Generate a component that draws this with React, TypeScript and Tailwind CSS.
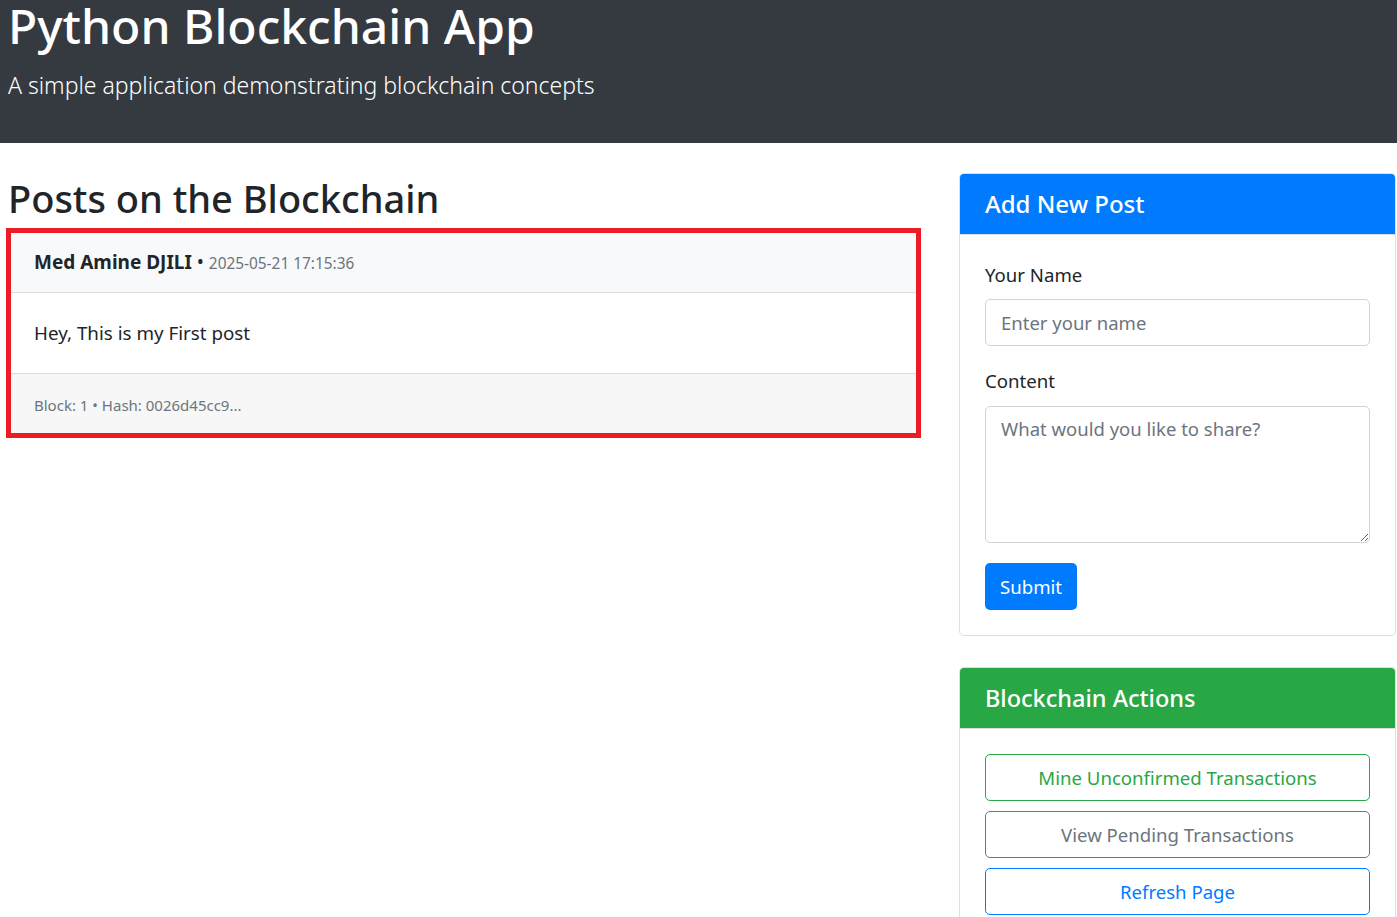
export default function App() {
  const font = "font-['Noto_Sans',sans-serif]";
  return (
    <div className={`${font} min-h-screen bg-white text-[#212529]`}>
      <header className="flow-root h-[143px] bg-[#343a40] pl-[8px] text-white">
        <h1 className="text-[48px] font-medium leading-[52px]">Python Blockchain App</h1>
        <p className="mt-[16px] text-[23px] font-light leading-[34px]">A simple application demonstrating blockchain concepts</p>
      </header>
      <main className="flex gap-[38px] pl-[6px] pr-[1px]">
        <section className="w-[915px] shrink-0">
          <h2 className="ml-[2px] mt-[32px] mb-[7px] text-[38px] font-medium leading-[46px]">Posts on the Blockchain</h2>
          <div className="border-[5px] border-[#ed1c24]">
            <div className="flex h-[60px] items-center border-b border-[#dcdcdc] bg-[#f8f9fa] pl-[23px]">
              <span className="text-[19px]">
                <strong className="font-bold">Med Amine DJILI</strong> •{" "}
                <small className="text-[15.4px] text-[#6c757d]">2025-05-21 17:15:36</small>
              </span>
            </div>
            <div className="flex h-[80px] items-center pl-[23px] pt-[1px] text-[18.8px]">Hey, This is my First post</div>
            <div className="flex h-[60px] items-center border-t border-[#dcdcdc] bg-[#f7f7f7] pl-[23px] pt-[4px]">
              <small className="text-[15px] text-[#6c757d]">Block: 1 • Hash: 0026d45cc9...</small>
            </div>
          </div>
        </section>
        <aside className="w-[437px] shrink-0 pt-[30px]">
          <div className="overflow-hidden rounded-[5px] border border-[#dfdfdf]">
            <div className="flex h-[61px] items-center border-b border-[#dfdfdf] bg-[#007bff] px-[25px]">
              <h5 className="text-[24px] font-medium leading-[30px] text-white">Add New Post</h5>
            </div>
            <div className="p-[25px]">
              <div className="mb-[20px]">
                <label className="mb-[9px] block text-[18.6px] leading-[30px]">Your Name</label>
                <input
                  className="block h-[47px] w-full rounded-[5px] border border-[#ced4da] px-[15px] text-[18.5px] text-[#495057] placeholder:text-[#6c757d]"
                  placeholder="Enter your name"
                />
              </div>
              <div className="mb-[20px]">
                <label className="mb-[10px] block text-[18.6px] leading-[30px]">Content</label>
                <textarea
                  className="block h-[137px] w-full rounded-[5px] border border-[#ced4da] px-[15px] py-[7px] text-[18.5px] leading-[30px] text-[#495057] placeholder:text-[#6c757d]"
                  placeholder="What would you like to share?"
                />
              </div>
              <button className="h-[47px] rounded-[5px] bg-[#007bff] px-[15px] text-[18.6px] text-white">Submit</button>
            </div>
          </div>
          <div className="mt-[31px] overflow-hidden rounded-[5px] border border-[#dfdfdf]">
            <div className="flex h-[61px] items-center border-b border-[#dfdfdf] bg-[#28a745] px-[25px]">
              <h5 className="text-[23.5px] font-medium leading-[30px] text-white">Blockchain Actions</h5>
            </div>
            <div className="flex flex-col gap-[10px] p-[25px]">
              <button className="h-[47px] w-full rounded-[5px] border border-[#28a745] text-[18.6px] text-[#28a745]">Mine Unconfirmed Transactions</button>
              <button className="h-[47px] w-full rounded-[5px] border border-[#6c757d] text-[18.6px] text-[#6c757d]">View Pending Transactions</button>
              <button className="h-[47px] w-full rounded-[5px] border border-[#007bff] text-[18.6px] text-[#007bff]">Refresh Page</button>
            </div>
          </div>
        </aside>
      </main>
    </div>
  );
}
